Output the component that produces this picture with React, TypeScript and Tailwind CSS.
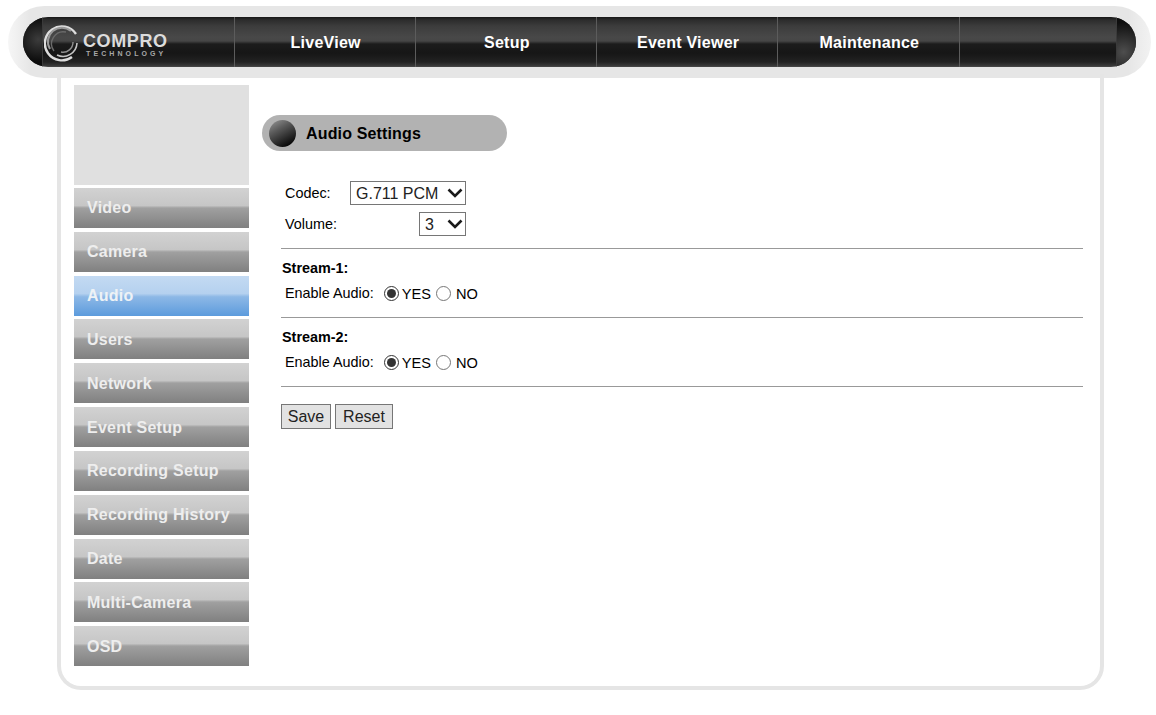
const navItems = ["LiveView", "Setup", "Event Viewer", "Maintenance"];

const sideItems = [
  "Video",
  "Camera",
  "Audio",
  "Users",
  "Network",
  "Event Setup",
  "Recording Setup",
  "Recording History",
  "Date",
  "Multi-Camera",
  "OSD",
];

const barBg =
  "bg-[linear-gradient(to_bottom,#161616_0%,#2c2c2c_6%,#3c3c3c_18%,#484848_40%,#464646_48%,#1c1c1c_54%,#161616_72%,#222222_90%,#383838_97%,#4a4a4a_100%)]";

function Logo() {
  return (
    <div className="flex h-full w-[190.5px] shrink-0 items-center">
      <svg width="38" height="38" viewBox="0 0 38 38" fill="none" className="ml-[1px] mt-[2px] shrink-0">
        <path d="M32 10 A17 17 0 1 0 28 33" stroke="#dddddd" strokeWidth="2.4" />
        <path d="M6 25 A14 14 0 0 1 27 7" stroke="#9a9a9a" strokeWidth="2" />
        <path d="M10 27 A12 12 0 0 1 22 8" stroke="#6a6a6a" strokeWidth="1.4" />
        <path d="M13 31 A14 14 0 0 0 33 19" stroke="#c4c4c4" strokeWidth="1.6" />
        <path d="M17 28 A10 10 0 0 0 29 18" stroke="#8e8e8e" strokeWidth="1.4" />
      </svg>
      <div className="ml-[1px] mt-[6px] flex flex-col">
        <span className="text-[18px] leading-[16px] font-bold tracking-[0.6px] text-[#dcdcdc]">COMPRO</span>
        <span className="mt-[1px] pl-[3px] text-[7px] leading-[7px] font-bold tracking-[3.1px] text-[#a8a8a8]">
          TECHNOLOGY
        </span>
      </div>
    </div>
  );
}

function Header() {
  return (
    <header className="ml-[8px] mt-[6px] flex h-[72px] w-[1143px] items-center rounded-[36px] bg-[linear-gradient(to_right,#f6f6f6_0%,#e6e6e6_2%,#e6e6e6_98%,#f2f2f2_100%)] px-[15px]">
      <div className={`flex h-[50px] w-full items-center overflow-hidden rounded-[25px] ${barBg}`}>
        <div className="h-full w-[20px] shrink-0 border-r border-r-[#3a3a3a] bg-[radial-gradient(circle_at_80%_45%,#3c3c3c_0%,#0c0c0c_70%)]" />
        <Logo />
        <nav className="flex h-full">
          {navItems.map((item) => (
            <div
              key={item}
              className="flex h-full w-[181.25px] items-center justify-center border-l border-l-[#5c5c5c] pl-[2px] pt-[1px] text-[16px] font-bold tracking-[0.25px] text-white"
            >
              {item}
            </div>
          ))}
          <div className="h-full border-l border-l-[#5c5c5c]" />
        </nav>
        <div className="h-full flex-1" />
        <div className="h-full w-[20px] shrink-0 border-l border-l-[#3a3a3a] bg-[radial-gradient(circle_at_35%_70%,#4e4e4e_0%,#0e0e0e_80%)]" />
      </div>
    </header>
  );
}

function Sidebar() {
  return (
    <aside className="flex w-[175px] shrink-0 flex-col gap-[3.85px]">
      <div className="mb-[-1px] h-[100px] bg-[#e0e0e0]" />
      {sideItems.map((item) => (
        <div
          key={item}
          className={
            item === "Audio"
              ? "flex h-[40px] items-center bg-[linear-gradient(to_bottom,#c3daf2_0%,#b5d1ef_44%,#8db8e6_52%,#5c9bdd_100%)] pl-[13px] pt-[1px] text-[16px] font-bold tracking-[0.25px] text-[#eef2f6]"
              : "flex h-[40px] items-center bg-[linear-gradient(to_bottom,#d2d2d2_0%,#c6c6c6_44%,#a0a0a0_50%,#808080_100%)] pl-[13px] pt-[1px] text-[16px] font-bold tracking-[0.25px] text-[#eeeeee]"
          }
        >
          {item}
        </div>
      ))}
    </aside>
  );
}

function Chevron() {
  return (
    <svg
      width="16"
      height="10"
      viewBox="0 0 16 10"
      fill="none"
      className="pointer-events-none absolute right-[3px] top-[7px]"
    >
      <path d="M1.5 1.5 L8 8 L14.5 1.5" stroke="#1a1a1a" strokeWidth="2.6" />
    </svg>
  );
}

function StreamBlock({ title }: { title: string }) {
  return (
    <div className="border-t border-t-[#999] pl-px">
      <div className="mt-[11px] text-[14.4px] leading-[16px] font-bold text-black">{title}</div>
      <div className="mt-[7px] mb-[14px] flex h-[20px] items-center pl-[3px] text-[14.4px] text-black">
        <span className="mr-[10px] pt-[1px]">Enable Audio:</span>
        <input type="radio" name={title} defaultChecked className="m-0 h-[15px] w-[15px] accent-[#333]" />
        <span className="ml-[3px] mr-[5px] mt-[4px] text-[14.6px]">YES</span>
        <input type="radio" name={title} className="m-0 h-[15px] w-[15px] accent-[#333]" />
        <span className="ml-[5px] mt-[4px] text-[14.6px]">NO</span>
      </div>
    </div>
  );
}

function AudioSettings() {
  return (
    <section className="ml-[13px] flex-1 pt-[30px]">
      <div className="flex h-[36px] w-[245px] items-center rounded-[18px] bg-[#b2b2b2] pl-[7px]">
        <div className="h-[27px] w-[27px] rounded-full bg-[linear-gradient(150deg,#9a9a9a_0%,#5a5a5a_35%,#0a0a0a_85%)]" />
        <span className="ml-[10px] pt-[1px] text-[16px] font-bold tracking-[0.15px] text-black">Audio Settings</span>
      </div>

      <div className="mr-[1px] ml-[19px] mt-[30px]">
        <div className="flex h-[24px] items-center pl-[4px] text-[14.4px] text-black">
          <span className="w-[65px] pt-[1px]">Codec:</span>
          <div className="relative h-[24px] w-[116px]">
            <select className="h-[24px] w-full appearance-none border border-[#767676] bg-white pb-[3px] pl-[5px] text-[16px] text-[#222]">
              <option>G.711 PCM</option>
            </select>
            <Chevron />
          </div>
        </div>
        <div className="mt-[7px] flex h-[24px] items-center pl-[4px] text-[14.4px] text-black">
          <span className="w-[134px] pt-[1px]">Volume:</span>
          <div className="relative h-[24px] w-[47px]">
            <select className="h-[24px] w-full appearance-none border border-[#767676] bg-white pb-[3px] pl-[5px] text-[16px] text-[#222]">
              <option>3</option>
            </select>
            <Chevron />
          </div>
        </div>

        <div className="mt-[12px]">
          <StreamBlock title="Stream-1:" />
          <StreamBlock title="Stream-2:" />
        </div>

        <div className="flex gap-[4px] border-t border-t-[#999] pt-[17px]">
          <button className="h-[25px] w-[50px] border border-[#767676] bg-[#e2e2e2] text-[16px] text-[#222]">Save</button>
          <button className="h-[25px] w-[58px] border border-[#767676] bg-[#e2e2e2] text-[16px] text-[#222]">Reset</button>
        </div>
      </div>
    </section>
  );
}

export default function App() {
  return (
    <div className="h-[715px] w-[1156px] overflow-hidden bg-white font-['Liberation_Sans',Arial,sans-serif]">
      <Header />
      <main className="ml-[57px] mt-[-4px] flex h-[616px] w-[1047px] rounded-b-[24px] border-x-4 border-b-4 border-[#e5e5e5] pt-[11px] pl-[13px] pr-[16px]">
        <Sidebar />
        <AudioSettings />
      </main>
    </div>
  );
}
